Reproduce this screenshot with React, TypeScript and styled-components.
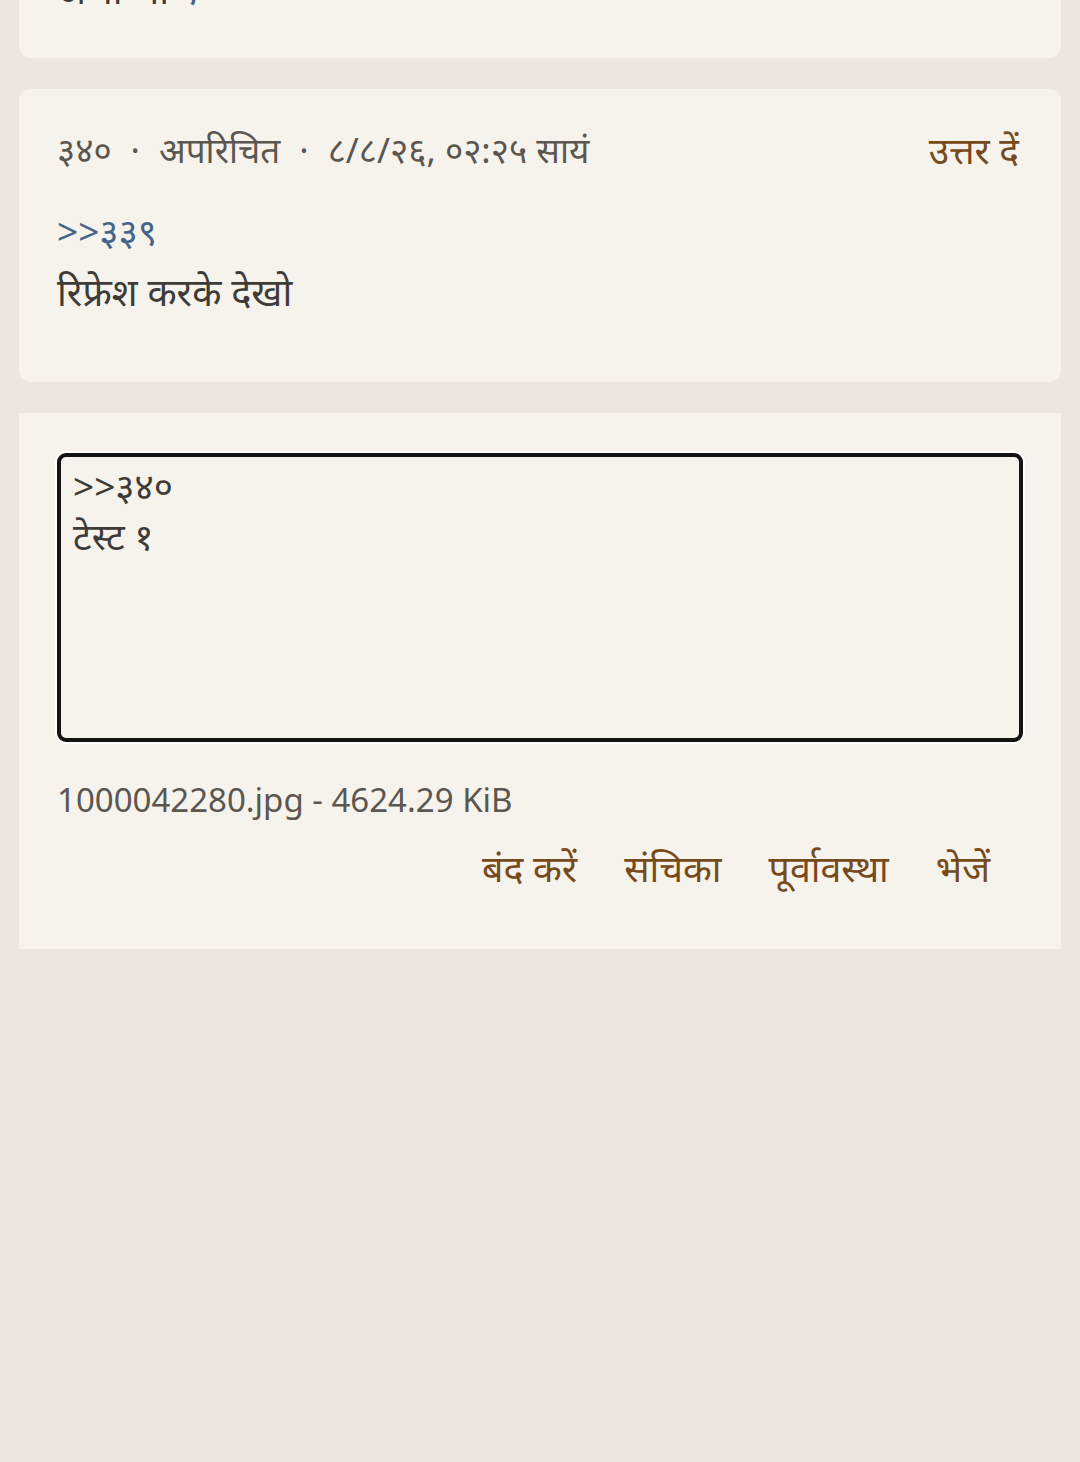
import React from 'react';
import styled, { createGlobalStyle } from 'styled-components';

const GlobalStyle = createGlobalStyle`
  html, body {
    margin: 0;
    padding: 0;
    background: #ebe6e0;
  }
  body {
    font-family: "Noto Sans", "Noto Sans Devanagari", sans-serif;
    color: #3f3b37;
  }
`;

const Page = styled.div`
  min-height: 1462px;
  padding: 0 19px;
  overflow: hidden;
`;

const Feed = styled.div`
  display: flex;
  flex-direction: column;
  gap: 31px;
  margin-top: -213px;
`;

const Card = styled.div`
  background: #f6f3ed;
  border-radius: 12px;
  padding: 38px 38px 38px;
`;

const MetaRow = styled.div`
  display: flex;
  align-items: center;
  justify-content: space-between;
  height: 46px;
`;

const Meta = styled.div`
  font-size: 35px;
  line-height: 46px;
  color: #5b5650;
  white-space: nowrap;
`;

const Dot = styled.span`
  margin: 0 19px;
`;

const ReplyLink = styled.a`
  font-size: 37px;
  line-height: 46px;
  color: #774a1c;
  text-decoration: none;
  margin-right: 4px;
`;

const Body = styled.div<{ $trail?: number }>`
  margin-top: 27px;
  margin-bottom: ${p => p.$trail ?? 0}px;
  font-size: 38px;
  line-height: 60px;
  color: #3f3b37;
  white-space: pre-wrap;
`;

const Quote = styled.a`
  font-size: 37px;
  color: #44648a;
  text-decoration: none;
`;

const Form = styled.div`
  background: #f6f3ed;
  padding: 40px 38px 58px;
`;

const TextArea = styled.textarea`
  display: block;
  box-sizing: border-box;
  width: 100%;
  height: 289px;
  margin: 0;
  padding: 4px 12px;
  border: 4px solid #141414;
  border-radius: 9px;
  box-shadow: 0 0 0 2px #ffffff;
  background: #f6f3ed;
  font-family: "Noto Sans", "Noto Sans Devanagari", sans-serif;
  font-size: 37px;
  line-height: 50px;
  color: #3f3b37;
  resize: none;
  outline: none;
`;

const FileInfo = styled.div`
  margin-top: 35px;
  font-size: 33px;
  line-height: 46px;
  color: #5b5650;
`;

const Actions = styled.div`
  display: flex;
  justify-content: flex-end;
  gap: 47px;
  margin-top: 22px;
  padding-right: 33px;
`;

const ActionButton = styled.button`
  border: none;
  background: none;
  padding: 0;
  font-family: "Noto Sans", "Noto Sans Devanagari", sans-serif;
  font-size: 37.5px;
  line-height: 46px;
  color: #774a1c;
  cursor: pointer;
`;

interface Post {
  no: string;
  time: string;
  lines: React.ReactNode;
}

const posts: Post[] = [
  {
    no: '३३९',
    time: '८/८/२६, ०२:२४ सायं',
    lines: (
      <>
        <Quote href="#">&gt;&gt;३३८</Quote>
        {'\n'}अभी भी <Quote href="#">९</Quote>
      </>
    ),
  },
  {
    no: '३४०',
    time: '८/८/२६, ०२:२५ सायं',
    lines: (
      <>
        <Quote href="#">&gt;&gt;३३९</Quote>
        {'\n'}रिफ्रेश करके देखो
      </>
    ),
  },
];

const App: React.FC = () => {
  return (
    <Page>
      <GlobalStyle />
      <Feed>
        {posts.map((post, i) => (
          <Card key={post.no}>
            <MetaRow>
              <Meta>
                {post.no}
                <Dot>·</Dot>
                अपरिचित
                <Dot>·</Dot>
                {post.time}
              </Meta>
              <ReplyLink href="#">उत्तर दें</ReplyLink>
            </MetaRow>
            <Body $trail={i === posts.length - 1 ? 23 : 0}>{post.lines}</Body>
          </Card>
        ))}
        <Form>
          <TextArea defaultValue={'>>३४०\nटेस्ट १'} />
          <FileInfo>1000042280.jpg - 4624.29 KiB</FileInfo>
          <Actions>
            <ActionButton>बंद करें</ActionButton>
            <ActionButton>संचिका</ActionButton>
            <ActionButton>पूर्वावस्था</ActionButton>
            <ActionButton>भेजें</ActionButton>
          </Actions>
        </Form>
      </Feed>
    </Page>
  );
};

export default App;
